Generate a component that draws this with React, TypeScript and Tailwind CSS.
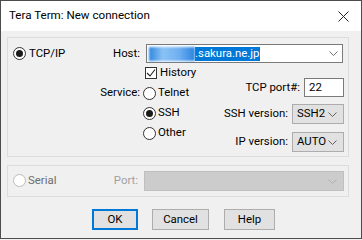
import React from 'react';

const font = { fontFamily: 'Roboto, "Noto Sans", sans-serif' };

function Radio({ checked = false, disabled = false }: { checked?: boolean; disabled?: boolean }) {
  return (
    <span
      className={`flex h-[13px] w-[13px] shrink-0 items-center justify-center rounded-full border bg-white ${
        disabled ? 'border-[#bcbcbc]' : 'border-[#333333]'
      }`}
    >
      {checked && <span className="h-[7px] w-[7px] rounded-full bg-[#1a1a1a]" />}
    </span>
  );
}

function Chevron({ color = '#606060' }: { color?: string }) {
  return (
    <svg width="9" height="5" viewBox="0 0 9 5" className="shrink-0">
      <path d="M0.5 0.5 L4.5 4.5 L8.5 0.5" fill="none" stroke={color} strokeWidth="1" />
    </svg>
  );
}

function Select({ value }: { value: string }) {
  return (
    <div className="flex h-[20px] w-[52px] items-center justify-between border border-[#adadad] bg-[#e1e1e1] pl-[4px] pr-[6px]">
      <span className="leading-none">{value}</span>
      <Chevron />
    </div>
  );
}

export default function App() {
  return (
    <div className="h-[240px] w-[362px] bg-[#f0f0f0] text-[11.4px] text-black" style={font}>
      <div className="flex h-[239px] w-[362px] flex-col border border-[#4d4d4d]">
        {/* title bar */}
        <div className="flex h-[30px] shrink-0 items-center justify-between bg-white pl-[8px] pr-[12px]">
          <span className="text-[11.6px]">Tera Term: New connection</span>
          <svg width="11" height="11" viewBox="0 0 11 11">
            <path d="M0.5 0.5 L10.5 10.5 M10.5 0.5 L0.5 10.5" stroke="#222" strokeWidth="1" />
          </svg>
        </div>

        {/* body */}
        <div className="flex flex-1 flex-col bg-[#f0f0f0] pl-[6px] pt-[6px]">
          {/* TCP/IP group */}
          <div className="flex h-[120px] w-[342px] flex-col border border-[#dcdcdc] pt-[6px]">
            <div className="flex h-[19px] items-center">
              <div className="flex w-[92px] items-center gap-[3px] pl-[5px]">
                <Radio checked />
                <span>TCP/IP</span>
              </div>
              <div className="w-[40px] text-right">Host:</div>
              <div className="ml-[6px] flex h-[19px] w-[197px] items-center justify-between border border-[#7a7a7a] bg-white pl-[2px] pr-[4px]">
                <span className="flex h-[14px] items-center">
                  <span className="h-[14px] w-[46px] bg-[linear-gradient(90deg,#2f86e0,#8cc2f5_30%,#6fb0f2_65%,#2c84de)] blur-[1px]" />
                  <span className="flex h-[14px] items-center bg-[#0078d7] pr-[1px] text-white">.sakura.ne.jp</span>
                </span>
                <Chevron color="#707070" />
              </div>
            </div>

            <div className="flex flex-1">
              <div className="w-[92px]" />
              <div className="flex w-[40px] flex-col">
                <div className="h-[20px]" />
                <div className="flex h-[20px] items-center justify-end">Service:</div>
              </div>
              <div className="ml-[3px] flex flex-col">
                <div className="flex h-[20px] items-center gap-[3px] pl-[2px]">
                  <span className="flex h-[12px] w-[12px] items-center justify-center border border-[#333333] bg-white">
                    <svg width="10" height="10" viewBox="0 0 10 10">
                      <path d="M1 5 L4 8 L9 1.5" fill="none" stroke="#222" strokeWidth="1.1" />
                    </svg>
                  </span>
                  <span>History</span>
                </div>
                <div className="flex h-[20px] items-center gap-[2px]">
                  <Radio />
                  <span>Telnet</span>
                </div>
                <div className="flex h-[20px] items-center gap-[2px]">
                  <Radio checked />
                  <span>SSH</span>
                </div>
                <div className="flex h-[20px] items-center gap-[2px]">
                  <Radio />
                  <span>Other</span>
                </div>
              </div>
              <div className="ml-auto flex flex-col items-end pr-[4px] pt-[15px]">
                <div className="flex h-[19px] items-center gap-[4px]">
                  <span>TCP port#:</span>
                  <div className="flex h-[19px] w-[40px] items-center border border-[#7a7a7a] bg-white pl-[4px]">22</div>
                </div>
                <div className="mt-[7px] flex h-[20px] items-center gap-[4px]">
                  <span>SSH version:</span>
                  <Select value="SSH2" />
                </div>
                <div className="mt-[8px] flex h-[20px] items-center gap-[4px]">
                  <span>IP version:</span>
                  <Select value="AUTO" />
                </div>
              </div>
            </div>
          </div>

          {/* Serial group */}
          <div className="mt-[8px] flex h-[32px] w-[342px] items-center border border-[#dcdcdc]">
            <div className="flex w-[92px] items-center gap-[2px] pl-[5px]">
              <Radio disabled />
              <span className="text-[#6d6d6d]">Serial</span>
            </div>
            <div className="w-[38px] text-right text-[#a0a0a0]">Port:</div>
            <div className="ml-[6px] flex h-[20px] w-[200px] items-center justify-end border border-[#bfbfbf] bg-[#cccccc] pr-[6px]">
              <Chevron color="#b0b0b0" />
            </div>
          </div>

          {/* buttons */}
          <div className="mt-[12px] flex items-center pl-[85px]">
            <button className="h-[21px] w-[46px] border-2 border-[#0078d7] bg-[#e1e1e1]">OK</button>
            <button className="ml-[14px] h-[21px] w-[57px] border border-[#adadad] bg-[#e1e1e1]">Cancel</button>
            <button className="ml-[15px] h-[21px] w-[51px] border border-[#adadad] bg-[#e1e1e1]">Help</button>
          </div>
        </div>
      </div>
    </div>
  );
}
